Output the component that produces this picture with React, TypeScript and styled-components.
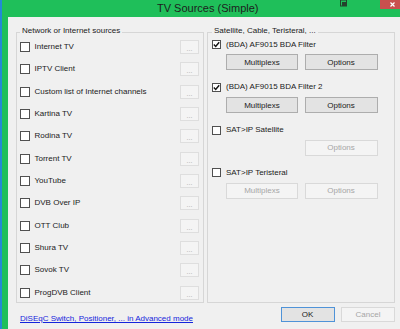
import React from "react";
import styled, { createGlobalStyle } from "styled-components";

const Global = createGlobalStyle`
  html, body { margin: 0; padding: 0; background: #f0f0f0; }
  body { font-family: "Liberation Sans", Arial, sans-serif; }
  * { box-sizing: border-box; }
`;

const Screen = styled.div`
  width: 400px;
  height: 329px;
  overflow: hidden;
  display: flex;
`;

const DesktopStrip = styled.div`
  width: 2px;
  flex: none;
  background: #2389d6;
`;

const Window = styled.div`
  flex: 1;
  min-width: 0;
  display: flex;
  flex-direction: column;
  background: #1fbf5a;
  padding-left: 6px;
`;

const TitleBar = styled.div`
  height: 17px;
  flex: none;
  display: flex;
  align-items: flex-start;
`;

const Title = styled.div`
  margin-left: 149px;
  margin-top: 2px;
  font-size: 11px;
  line-height: 13px;
  color: #1d1d1d;
  white-space: nowrap;
`;

const Controls = styled.div`
  margin-left: auto;
  display: flex;
  align-items: flex-start;
`;

const SysIcon = styled.svg`
  width: 7px;
  height: 7px;
  margin-right: 33px;
  display: block;
`;

const CloseButton = styled.div`
  width: 20px;
  height: 9px;
  background: #c9504e;
  display: flex;
  align-items: center;
  justify-content: center;
  padding-left: 4px;
`;

const Client = styled.div`
  flex: 1;
  background: #f0f0f0;
  display: flex;
  flex-direction: column;
  padding: 15px 5px 0 8px;
  font-size: 8px;
  color: #1b1b1b;
`;

const GroupsRow = styled.div`
  display: flex;
  gap: 3px;
  height: 271px;
  flex: none;
`;

const GroupBox = styled.div<{ $padLeft: number }>`
  width: 188px;
  height: 100%;
  border: 1px solid #d6d6d6;
  display: flex;
  flex-direction: column;
  padding: 0 4px 0 ${(p) => p.$padLeft}px;
`;

const GroupTitle = styled.div`
  align-self: flex-start;
  margin-top: -7px;
  height: 10px;
  line-height: 10px;
  padding: 0 2px;
  background: #f0f0f0;
  white-space: nowrap;
`;

const SourceRow = styled.div`
  height: 22.33px;
  display: flex;
  align-items: center;
  flex: none;
`;

const Box = styled.div<{ $size: number }>`
  width: ${(p) => p.$size}px;
  height: ${(p) => p.$size}px;
  border: 1px solid #505050;
  background: #ffffff;
  flex: none;
  display: flex;
  align-items: center;
  justify-content: center;
`;

const Label = styled.span<{ $gap: number }>`
  margin-left: ${(p) => p.$gap}px;
  line-height: 10px;
  white-space: nowrap;
`;

const DotsButton = styled.div`
  margin-left: auto;
  width: 19px;
  height: 14px;
  border: 1px solid #dedede;
  background: #f4f4f4;
  color: #a8a8a8;
  font-size: 7px;
  line-height: 14px;
  text-align: center;
  padding-top: 1px;
`;

const DeviceBlock = styled.div<{ $first?: boolean }>`
  display: flex;
  flex-direction: column;
  margin-top: ${(p) => (p.$first ? 2.5 : 0)}px;
  margin-bottom: 11px;
`;

const DeviceRow = styled.div`
  height: 12px;
  display: flex;
  align-items: center;
`;

const ButtonGrid = styled.div`
  margin-top: 3.8px;
  margin-left: 14px;
  display: grid;
  grid-template-columns: 72px 73px;
  column-gap: 6.5px;
  height: 16px;
`;

const PushButton = styled.div<{ $disabled?: boolean; $col?: number; $default?: boolean }>`
  grid-column: ${(p) => p.$col ?? "auto"};
  height: 16px;
  border: 1px solid
    ${(p) => (p.$disabled ? "#d9d9d9" : p.$default ? "#4f93d8" : "#adadad")};
  background: ${(p) => (p.$disabled ? "#f4f4f4" : "#e3e3e3")};
  color: ${(p) => (p.$disabled ? "#a6a6a6" : "#1b1b1b")};
  display: flex;
  align-items: center;
  justify-content: center;
  font-size: 8px;
  white-space: nowrap;
`;

const BottomRow = styled.div`
  display: flex;
  align-items: flex-start;
`;

const AdvancedLink = styled.a`
  margin-top: 11px;
  margin-left: 4px;
  line-height: 10px;
  color: #1424dc;
  text-decoration: underline;
  white-space: nowrap;
  cursor: pointer;
`;

const DialogButtons = styled.div`
  margin-left: auto;
  margin-top: 4.3px;
  display: flex;
  gap: 6.5px;
`;

const DialogButton = styled(PushButton)`
  width: 54px;
  height: 15px;
`;

const Check = () => (
  <svg width="7" height="7" viewBox="0 0 7 7">
    <path d="M0.8 3.6 L2.7 5.5 L6.2 1.2" fill="none" stroke="#111" strokeWidth="1.4" />
  </svg>
);

const sources = [
  "Internet TV",
  "IPTV Client",
  "Custom list of Internet channels",
  "Kartina TV",
  "Rodina TV",
  "Torrent TV",
  "YouTube",
  "DVB Over IP",
  "OTT Club",
  "Shura TV",
  "Sovok TV",
  "ProgDVB Client",
];

type Device = {
  name: string;
  checked: boolean;
  multiplex: "on" | "off" | "none";
  options: "on" | "off";
};

const devices: Device[] = [
  { name: "(BDA) AF9015 BDA Filter", checked: true, multiplex: "on", options: "on" },
  { name: "(BDA) AF9015 BDA Filter 2", checked: true, multiplex: "on", options: "on" },
  { name: "SAT>IP Satellite", checked: false, multiplex: "none", options: "off" },
  { name: "SAT>IP Teristeral", checked: false, multiplex: "off", options: "off" },
];

export default function App() {
  return (
    <>
      <Global />
      <Screen>
        <DesktopStrip />
        <Window>
          <TitleBar>
            <Title>TV Sources (Simple)</Title>
            <Controls>
              <SysIcon viewBox="0 0 7 7">
                <rect x="0.5" y="0" width="6" height="6" fill="none" stroke="#24432c" strokeWidth="1" />
                <rect x="2" y="2" width="4" height="4" fill="#24432c" />
              </SysIcon>
              <CloseButton>
                <svg width="5" height="5" viewBox="0 0 5 5">
                  <path d="M0.5 0.5 L4.5 4.5 M4.5 0.5 L0.5 4.5" stroke="#fff" strokeWidth="1.2" />
                </svg>
              </CloseButton>
            </Controls>
          </TitleBar>
          <Client>
            <GroupsRow>
              <GroupBox $padLeft={3}>
                <GroupTitle>Network or Internet sources</GroupTitle>
                {sources.map((s) => (
                  <SourceRow key={s}>
                    <Box $size={10} />
                    <Label $gap={4.5}>{s}</Label>
                    <DotsButton>...</DotsButton>
                  </SourceRow>
                ))}
              </GroupBox>
              <GroupBox $padLeft={4}>
                <GroupTitle>Satellite, Cable, Teristeral, ...</GroupTitle>
                {devices.map((d, i) => (
                  <DeviceBlock key={d.name} $first={i === 0}>
                    <DeviceRow>
                      <Box $size={9}>{d.checked && <Check />}</Box>
                      <Label $gap={5}>{d.name}</Label>
                    </DeviceRow>
                    <ButtonGrid>
                      {d.multiplex !== "none" && (
                        <PushButton $col={1} $disabled={d.multiplex === "off"}>
                          Multiplexs
                        </PushButton>
                      )}
                      <PushButton $col={2} $disabled={d.options === "off"}>
                        Options
                      </PushButton>
                    </ButtonGrid>
                  </DeviceBlock>
                ))}
              </GroupBox>
            </GroupsRow>
            <BottomRow>
              <AdvancedLink>DiSEqC Switch, Positioner, ... in Advanced mode</AdvancedLink>
              <DialogButtons>
                <DialogButton $default>OK</DialogButton>
                <DialogButton $disabled>Cancel</DialogButton>
              </DialogButtons>
            </BottomRow>
          </Client>
        </Window>
      </Screen>
    </>
  );
}
